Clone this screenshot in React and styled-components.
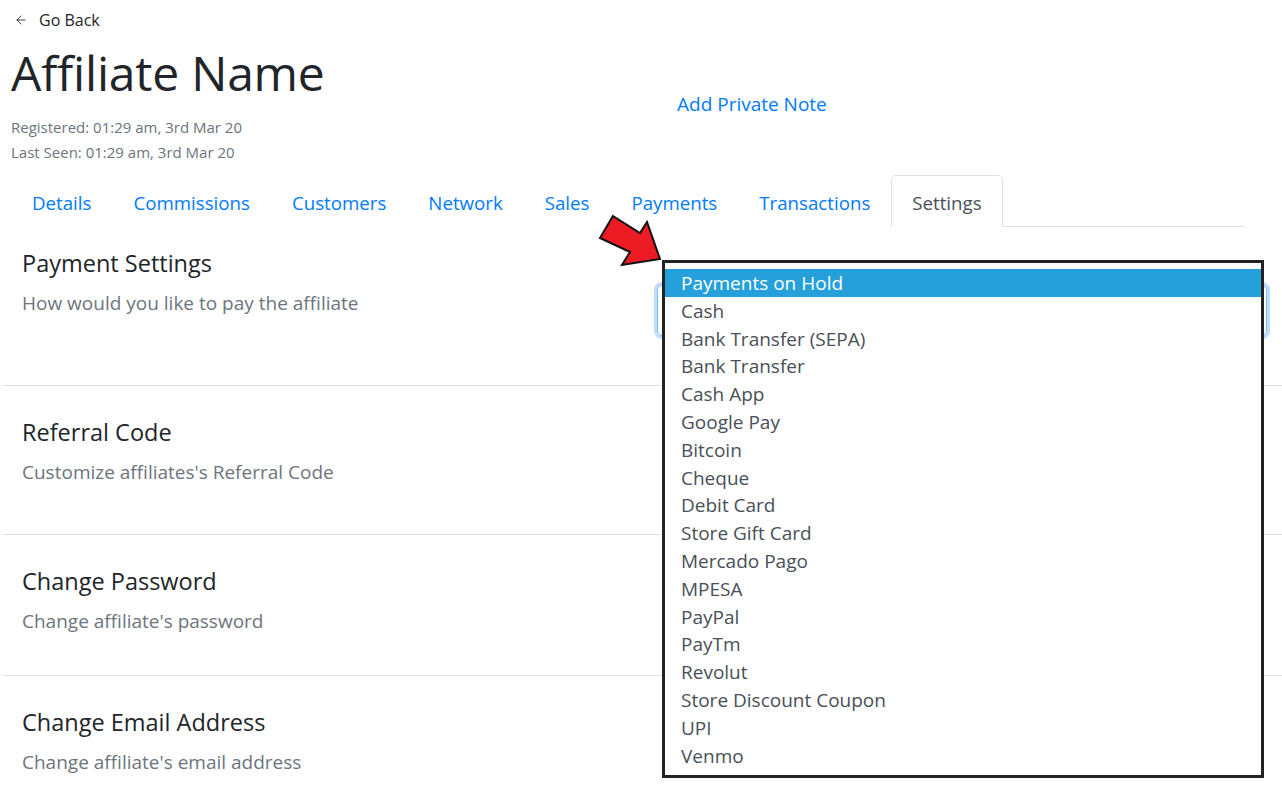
import React from "react";
import styled, { createGlobalStyle } from "styled-components";
import { ArrowLeft } from "lucide-react";

const GlobalStyle = createGlobalStyle`
  body {
    margin: 0;
    font-family: "Open Sans", "Noto Sans", sans-serif;
    color: #212529;
    background: #fff;
    overflow: hidden;
  }
  * { box-sizing: border-box; }
`;

const Page = styled.div`
  position: relative;
  width: 1282px;
  height: 797px;
  overflow: hidden;
`;

const Header = styled.div`
  padding: 0 11px;
`;

const GoBack = styled.a`
  display: flex;
  align-items: center;
  height: 40px;
  padding-left: 3px;
  font-size: 16px;
  color: #212529;
  cursor: pointer;

  svg {
    margin-right: 11px;
  }
`;

const TitleRow = styled.div`
  display: flex;
  align-items: flex-start;
`;

const TitleCol = styled.div`
  width: 666px;
`;

const Title = styled.h1`
  margin: 3px 0 12px;
  font-size: 48px;
  font-weight: 400;
  line-height: 60px;
  letter-spacing: -0.2px;
`;

const Meta = styled.div`
  font-size: 15px;
  line-height: 25px;
  color: #6c757d;
`;

const NoteLink = styled.a`
  margin-top: 51px;
  font-size: 19px;
  line-height: 26px;
  color: #007bff;
  cursor: pointer;
`;

const Tabs = styled.ul`
  display: flex;
  list-style: none;
  margin: 10px 37px 0 11px;
  padding: 0;
  border-bottom: 1px solid #dee2e6;
`;

const Tab = styled.li`
  margin-bottom: -1px;
  padding: 13px 20px 10px;
  font-size: 18.7px;
  line-height: 27px;
  color: ${(p) => (p.$active ? "#495057" : "#007bff")};
  border: 1px solid ${(p) => (p.$active ? "#dee2e6" : "transparent")};
  border-bottom-color: ${(p) => (p.$active ? "#fff" : "transparent")};
  border-radius: 5px 5px 0 0;
  background: #fff;
  cursor: pointer;
`;

const Section = styled.section`
  display: flex;
  justify-content: space-between;
  min-height: ${(p) => p.$h}px;
  padding-top: ${(p) => p.$top}px;
  border-bottom: ${(p) => (p.$last ? "none" : "1px solid #dee2e6")};
  margin-left: 2px;
`;

const SectionText = styled.div`
  padding-left: 20px;
`;

const SectionTitle = styled.h3`
  margin: 0;
  font-size: 23.5px;
  font-weight: 400;
  line-height: 28px;
`;

const SectionSub = styled.p`
  margin: 13px 0 0;
  font-size: 19px;
  line-height: 27px;
  color: #6c757d;
`;

const Control = styled.div`
  width: 610px;
  margin-right: 15px;
  padding-top: 36px;
`;

const Select = styled.div`
  height: 51px;
  border: 1px solid #80bdff;
  border-radius: 5px;
  box-shadow: 0 0 0 3px rgba(0, 123, 255, 0.25);
`;

const Dropdown = styled.ul`
  position: absolute;
  left: 662px;
  top: 260px;
  width: 602px;
  height: 518px;
  margin: 0;
  padding: 6px 0;
  list-style: none;
  background: #fff;
  border: 3px solid #222;
`;

const Option = styled.li`
  height: 27.8px;
  padding-left: 16px;
  font-size: 19px;
  line-height: 29.5px;
  color: ${(p) => (p.$selected ? "#fff" : "#495057")};
  background: ${(p) => (p.$selected ? "#26a0da" : "transparent")};
`;

const Pointer = styled.svg`
  position: absolute;
  left: 595px;
  top: 210px;
`;

const tabs = ["Details", "Commissions", "Customers", "Network", "Sales", "Payments", "Transactions", "Settings"];

const methods = [
  "Payments on Hold",
  "Cash",
  "Bank Transfer (SEPA)",
  "Bank Transfer",
  "Cash App",
  "Google Pay",
  "Bitcoin",
  "Cheque",
  "Debit Card",
  "Store Gift Card",
  "Mercado Pago",
  "MPESA",
  "PayPal",
  "PayTm",
  "Revolut",
  "Store Discount Coupon",
  "UPI",
  "Venmo",
];

const sections = [
  { title: "Payment Settings", sub: "How would you like to pay the affiliate", h: 159, top: 22, select: true },
  { title: "Referral Code", sub: "Customize affiliates's Referral Code", h: 149, top: 32 },
  { title: "Change Password", sub: "Change affiliate's password", h: 141, top: 32 },
  { title: "Change Email Address", sub: "Change affiliate's email address", h: 122, top: 32, last: true },
];

export default function App() {
  return (
    <Page>
      <GlobalStyle />
      <Header>
        <GoBack>
          <ArrowLeft size={14} strokeWidth={1.5} />
          Go Back
        </GoBack>
        <TitleRow>
          <TitleCol>
            <Title>Affiliate Name</Title>
            <Meta>Registered: 01:29 am, 3rd Mar 20</Meta>
            <Meta>Last Seen: 01:29 am, 3rd Mar 20</Meta>
          </TitleCol>
          <NoteLink>Add Private Note</NoteLink>
        </TitleRow>
      </Header>

      <Tabs>
        {tabs.map((t) => (
          <Tab key={t} $active={t === "Settings"}>
            {t}
          </Tab>
        ))}
      </Tabs>

      {sections.map((s) => (
        <Section key={s.title} $h={s.h} $top={s.top} $last={s.last}>
          <SectionText>
            <SectionTitle>{s.title}</SectionTitle>
            <SectionSub>{s.sub}</SectionSub>
          </SectionText>
          {s.select && (
            <Control>
              <Select />
            </Control>
          )}
        </Section>
      ))}

      <Dropdown>
        {methods.map((m, i) => (
          <Option key={m} $selected={i === 0}>
            {m}
          </Option>
        ))}
      </Dropdown>

      <Pointer width="72" height="60" viewBox="0 0 72 60">
        <polygon
          points="18,6 45,23 52,12 65,49 27,55 35,42 5,28"
          fill="#ed1c24"
          stroke="#111"
          strokeWidth="2"
          strokeLinejoin="miter"
        />
      </Pointer>
    </Page>
  );
}
